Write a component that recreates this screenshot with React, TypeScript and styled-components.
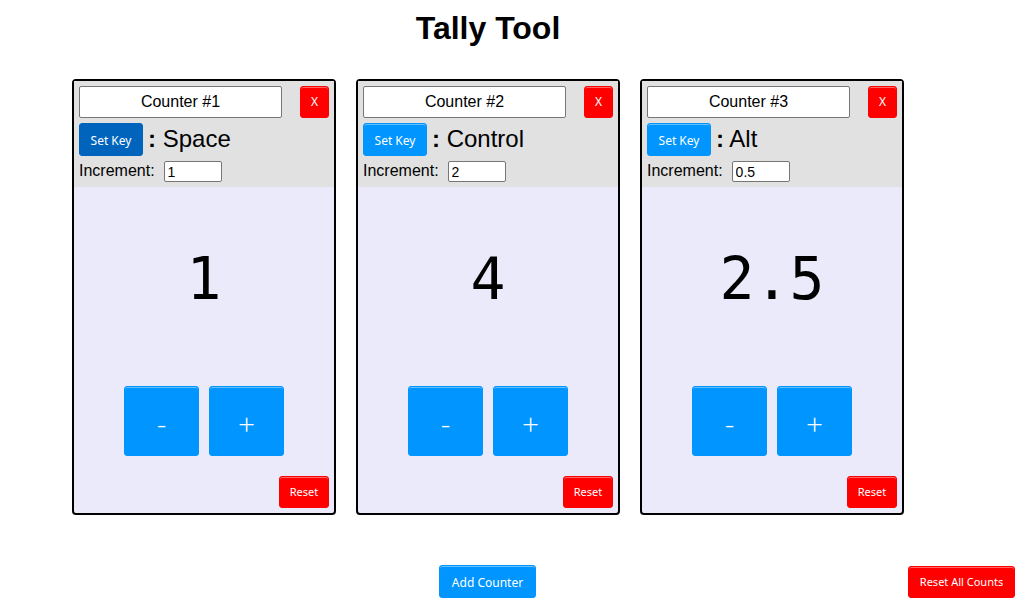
import React, { useState } from "react";
import styled, { createGlobalStyle, css } from "styled-components";

const GlobalStyle = createGlobalStyle`
  * { box-sizing: border-box; }
  body {
    margin: 0;
    background: #fff;
    color: #000;
    font-family: "Liberation Sans", Arial, sans-serif;
    font-size: 16px;
  }
`;

const Page = styled.main`
  display: flex;
  flex-direction: column;
  padding: 8px 48px 8px 0;
`;

const Title = styled.h1`
  margin: 0;
  font-size: 32px;
  line-height: 40px;
  text-align: center;
`;

const Board = styled.section`
  display: flex;
  flex-wrap: wrap;
  justify-content: center;
  gap: 20px;
  margin: 31px 0 50px;
`;

const Card = styled.article`
  display: flex;
  flex-direction: column;
  width: 264px;
  border: 2px solid #000;
  border-radius: 4px;
  background: #ebeafa;
`;

const CardHeader = styled.header`
  display: flex;
  flex-direction: column;
  gap: 5px;
  padding: 5px;
  background: #e1e1e1;
`;

const Row = styled.div<{ $spread?: boolean }>`
  display: flex;
  align-items: flex-start;
  justify-content: ${(p) => (p.$spread ? "space-between" : "flex-start")};
`;

const Field = styled.input`
  border: 1px solid #767676;
  border-radius: 2px;
  background: #fff;
  color: #000;
  font-family: inherit;
`;

const NameField = styled(Field)`
  width: 203px;
  height: 32px;
  padding: 0 2px;
  font-size: 16px;
  text-align: center;
`;

const IncrementField = styled(Field)`
  width: 58px;
  height: 21px;
  margin-left: 9px;
  padding: 0 3px;
  font-size: 14px;
`;

const IncrementLabel = styled.label`
  line-height: 20px;
`;

const Button = styled.button<{ $tone?: "blue" | "red"; $pressed?: boolean }>`
  height: 33px;
  padding: 2px 10px 0;
  border: 1px solid #0095ff;
  border-radius: 3px;
  background: #0095ff;
  box-shadow: inset 0 1px 0 rgba(255, 255, 255, 0.4);
  color: #fff;
  font-family: "Noto Sans", sans-serif;
  font-size: 12px;
  line-height: 16px;
  white-space: nowrap;
  cursor: pointer;
  ${(p) =>
    p.$tone === "red" &&
    css`
      height: 32px;
      padding: 0 9px;
      border-color: #f00;
      background: #f00;
      font-size: 11px;
    `}
  ${(p) =>
    p.$pressed &&
    css`
      border-color: #0064bd;
      background: #0064bd;
      box-shadow: none;
    `}
`;

const SetKeyButton = styled(Button)`
  width: 64px;
`;

const StepButton = styled(Button)`
  width: 75px;
  height: 70px;
  padding: 6px 0 0;
  font-family: "Open Sans", sans-serif;
  font-size: 30px;
  font-weight: 300;
  line-height: 32px;
`;

const RemoveButton = styled(Button)`
  width: 29px;
  padding: 0;
  font-size: 12px;
`;

const ResetButton = styled(Button)`
  align-self: flex-end;
  width: 50px;
`;

const KeyName = styled.span`
  margin-left: 5px;
  font-size: 24px;
  line-height: 32px;
`;

const CardBody = styled.div`
  display: flex;
  flex-direction: column;
  gap: 20px;
  padding: 5px;
`;

const Count = styled.output`
  font-family: "DejaVu Sans Mono", monospace;
  font-size: 58px;
  line-height: 174px;
  text-align: center;
`;

const Steps = styled.div`
  display: flex;
  justify-content: center;
  gap: 10px;
`;

const Footer = styled.footer`
  display: grid;
  grid-template-columns: 1fr auto 1fr;
  align-items: end;
  margin-right: -39px;
`;

const AddButton = styled(Button)`
  grid-column: 2;
  width: 97px;
  margin-right: 40px;
`;

const ResetAllButton = styled(Button)`
  justify-self: end;
  width: 107px;
`;

interface Counter {
  id: number;
  name: string;
  keyName: string;
  increment: string;
  count: number;
}

const initialCounters: Counter[] = [
  { id: 1, name: "Counter #1", keyName: "Space", increment: "1", count: 1 },
  { id: 2, name: "Counter #2", keyName: "Control", increment: "2", count: 4 },
  { id: 3, name: "Counter #3", keyName: "Alt", increment: "0.5", count: 2.5 },
];

export default function App() {
  const [counters, setCounters] = useState(initialCounters);
  const [activeId, setActiveId] = useState(1);

  const update = (id: number, change: Partial<Counter>) =>
    setCounters((list) => list.map((c) => (c.id === id ? { ...c, ...change } : c)));

  const addCounter = () =>
    setCounters((list) => {
      const id = Math.max(0, ...list.map((c) => c.id)) + 1;
      return [...list, { id, name: `Counter #${id}`, keyName: "", increment: "1", count: 0 }];
    });

  return (
    <>
      <GlobalStyle />
      <Page>
        <Title>Tally Tool</Title>
        <Board>
          {counters.map((c) => {
            const step = Number(c.increment) || 0;
            return (
              <Card key={c.id}>
                <CardHeader>
                  <Row $spread>
                    <NameField
                      aria-label="Counter name"
                      value={c.name}
                      onChange={(e) => update(c.id, { name: e.target.value })}
                    />
                    <RemoveButton
                      $tone="red"
                      onClick={() => setCounters((list) => list.filter((x) => x.id !== c.id))}
                    >
                      X
                    </RemoveButton>
                  </Row>
                  <Row>
                    <SetKeyButton $pressed={c.id === activeId} onClick={() => setActiveId(c.id)}>
                      Set Key
                    </SetKeyButton>
                    <KeyName>
                      <b>:</b> {c.keyName}
                    </KeyName>
                  </Row>
                  <Row>
                    <IncrementLabel htmlFor={`increment-${c.id}`}>Increment:</IncrementLabel>
                    <IncrementField
                      id={`increment-${c.id}`}
                      value={c.increment}
                      onChange={(e) => update(c.id, { increment: e.target.value })}
                    />
                  </Row>
                </CardHeader>
                <CardBody>
                  <Count>{c.count}</Count>
                  <Steps>
                    <StepButton onClick={() => update(c.id, { count: c.count - step })}>-</StepButton>
                    <StepButton onClick={() => update(c.id, { count: c.count + step })}>+</StepButton>
                  </Steps>
                  <ResetButton $tone="red" onClick={() => update(c.id, { count: 0 })}>
                    Reset
                  </ResetButton>
                </CardBody>
              </Card>
            );
          })}
        </Board>
        <Footer>
          <AddButton onClick={addCounter}>Add Counter</AddButton>
          <ResetAllButton
            $tone="red"
            onClick={() => setCounters((list) => list.map((c) => ({ ...c, count: 0 })))}
          >
            Reset All Counts
          </ResetAllButton>
        </Footer>
      </Page>
    </>
  );
}
